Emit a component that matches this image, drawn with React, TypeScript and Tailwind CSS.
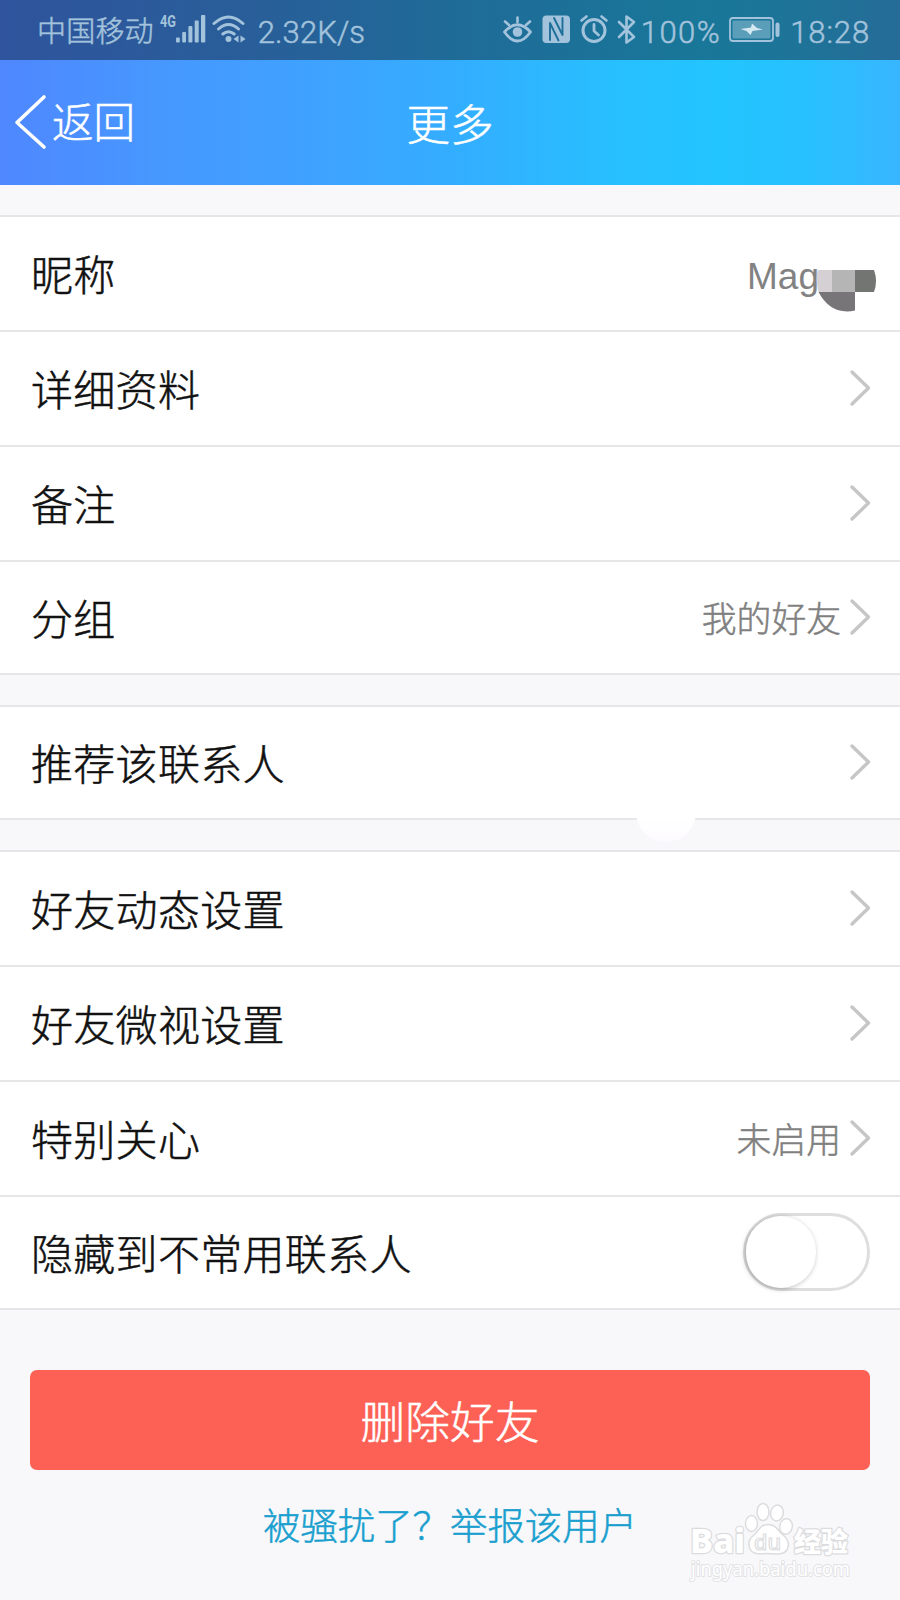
import type { ReactNode } from "react";

const CJK = "font-['Noto_Sans_CJK_SC',sans-serif]";
const LATIN = "font-[Roboto,'Noto_Sans_CJK_SC',sans-serif]";

function Chevron() {
  return (
    <svg className="mb-[1px] h-[38px] w-[22px] shrink-0" viewBox="0 0 22 38" fill="none" stroke="#c6c6c6" strokeWidth="3.4" strokeLinecap="round" strokeLinejoin="round">
      <path d="M3 3 L19.5 19 L3 35" />
    </svg>
  );
}

function Row({ label, value, last, children }: { label: string; value?: string; last?: boolean; children?: ReactNode }) {
  return (
    <div className={`flex items-center justify-between border-b-2 border-[#e6e6e8] pl-[31px] pr-[29px] ${last ? "h-[113px]" : "h-[115px]"}`}>
      <span className="pb-[2px] text-[42px] leading-none tracking-[0.3px] text-[#111]">{label}</span>
      {children ?? (
        <div className="flex items-center gap-[8px]">
          {value && <span className="text-[34.8px] leading-none text-[#808080]">{value}</span>}
          <Chevron />
        </div>
      )}
    </div>
  );
}

function Group({ children }: { children: ReactNode }) {
  return <section className="border-t-2 border-[#e6e6e8] bg-white">{children}</section>;
}

function StatusBar() {
  return (
    <div className={`flex h-[60px] items-center bg-[linear-gradient(90deg,#2f549d_0%,#285f99_30%,#1f6b98_50%,#197799_78%,#1c7598_86%,#256c98_100%)] pl-[37px] pr-[31px] text-[#a3c3dc] ${LATIN}`}>
      <span className="pt-[4px] text-[29px] leading-none tracking-[0.2px]">中国移动</span>
      <svg className="ml-[4px] h-[46px] w-[48px]" viewBox="157 8 48 46" fill="currentColor" strokeWidth="0">
        <text x="159" y="28" fontSize="17" fontWeight="700" textLength="16" lengthAdjust="spacingAndGlyphs">4G</text>
        <rect x="175" y="38.500" width="3.800" height="5" rx="1" />
        <rect x="181.200" y="33" width="3.800" height="10.500" rx="1" />
        <rect x="187.400" y="27" width="4" height="16.500" rx="1" />
        <rect x="193.700" y="21.500" width="4" height="22" rx="1" />
        <rect x="200" y="16" width="4.300" height="27.500" rx="1" />
      </svg>
      <svg className="ml-[6px] h-[34px] w-[34px]" viewBox="212 14 34 34" fill="none" stroke="currentColor" strokeWidth="3" strokeLinecap="round">
        <path d="M214 24.500 Q228.500 11.500 243 24.500" />
        <path d="M218.500 30 Q228.500 21 238.500 30" />
        <path d="M222.800 35 Q228.500 30.500 234.200 35" />
        <circle cx="228.500" cy="40" r="3" fill="currentColor" stroke="none" />
        <path d="M238.500 36.500v7l-5-3.500z M240.500 36.500v7l5-3.500z" fill="currentColor" stroke="none" />
      </svg>
      <span className="ml-[12px] pt-[5px] text-[31px] leading-none tracking-[0.1px]">2.32K/s</span>
      <svg className="ml-auto h-[34px] w-[136px] shrink-0" viewBox="502 14 136 34" fill="none" stroke="currentColor" strokeLinecap="round" strokeLinejoin="round">
        <path d="M504.500 33 Q517.500 18.500 530.500 33 Q517.500 51 504.500 33z" strokeWidth="2.800" />
        <circle cx="517.500" cy="33" r="4.800" fill="currentColor" stroke="none" />
        <path d="M517.500 23V18.500 M509 26l-4-3.500 M526 26l4-3.500" strokeWidth="2.600" />
        <rect x="542.500" y="16.500" width="27.500" height="27.500" rx="4" fill="currentColor" stroke="none" />
        <path d="M550 41v-17l8.500 17.500 M554 19l8.500 17v-17" stroke="#1e6f99" strokeWidth="1.900" />
        <circle cx="594" cy="31.500" r="11" strokeWidth="3" />
        <path d="M594 25.500v6.500l4.500 4" strokeWidth="2.800" />
        <path d="M581.500 21.500l5-4 M601.500 17.500l5 4" strokeWidth="2.600" />
        <path d="M619 23l15 15-7.500 5.500v-26l7.500 5.500-15 15" strokeWidth="2.600" />
      </svg>
      <span className="ml-[3px] pt-[5px] text-[31px] leading-none tracking-[1.500px]">100%</span>
      <svg className="ml-[8px] h-[26px] w-[52px] shrink-0" viewBox="730 18 52 26" fill="none" stroke="currentColor">
        <rect x="731" y="19" width="43" height="23" rx="3" strokeWidth="1.800" />
        <rect x="733.500" y="21.500" width="38" height="18" rx="1" fill="#5b9eb9" stroke="none" />
        <path d="M741.500 30l10.500-1.500 1-4 5 4.500 6 1.500-10.500 1.500-2 4-4-4z" fill="#d3e8f0" stroke="none" />
        <rect x="776.500" y="23.500" width="4" height="14.500" rx="2" fill="currentColor" stroke="none" />
      </svg>
      <span className="-mr-[1px] ml-[9px] pt-[5px] text-[31px] leading-none tracking-[0.900px]">18:28</span>
    </div>
  );
}

function Header() {
  return (
    <header className="grid h-[125px] grid-cols-3 items-center bg-[linear-gradient(90deg,#4f87ff_0%,#4698ff_18%,#3fa2ff_35%,#34adff_50%,#28bfff_68%,#22c5ff_80%,#28c0ff_90%,#38b6ff_100%)] text-white">
      <div className="flex items-center pb-[2px] pl-[14px]">
        <svg className="h-[56px] w-[33px]" viewBox="0 0 33 56" fill="none" stroke="currentColor" strokeWidth="3.600" strokeLinecap="round" strokeLinejoin="round">
          <path d="M30 3 L3 28.500 L30 53" />
        </svg>
        <span className="ml-[5px] pb-[2px] text-[41.500px] leading-none">返回</span>
      </div>
      <h1 className="text-center text-[43.500px] leading-none">更多</h1>
    </header>
  );
}

function Nickname() {
  return (
    <div className="relative -mr-[6px] flex h-[60px] items-center">
      <span className="pr-[58px] pt-[5px] font-['Liberation_Sans',sans-serif] text-[37px] leading-none text-[#828282] [-webkit-text-stroke:0]">Mag</span>
      <svg className="absolute right-0 top-[24px] h-[44px] w-[62px]" viewBox="815 268 62 44">
        <path d="M817.500 270h15v22h-14q-3-11-1-22z" fill="#d4d0d4" />
        <path d="M832 270h23v22h-23z" fill="#b5b5b5" />
        <path d="M855 270h19q4 11 0 22h-19z" fill="#727572" />
        <path d="M818.500 292h36.500v18.500q-24 5-36.500-18.500z" fill="#777577" />
      </svg>
    </div>
  );
}

function Switch() {
  return (
    <div className="relative mb-[1px] mr-[1px] h-[78px] w-[127px] rounded-full border-[3px] border-[#dedede] bg-white">
      <div className="h-[72px] w-[70px] rounded-full bg-white shadow-[-1px_1px_5px_rgba(0,0,0,0.28)]" />
    </div>
  );
}

function Watermark() {
  return (
    <svg className="absolute bottom-[18px] right-[44px] h-[82px] w-[170px]" viewBox="686 1500 170 82" fill="#fff" stroke="#dcdcde" strokeWidth="1.500">
      <g fontFamily="Noto Sans" paintOrder="stroke" strokeWidth="2.500" strokeLinejoin="round">
        <text x="690" y="1553" fontSize="34" fontWeight="800" textLength="55" lengthAdjust="spacingAndGlyphs">Bai</text>
        <text x="794" y="1552" fontSize="27" fontWeight="900" fontFamily="Noto Sans CJK SC" textLength="54" lengthAdjust="spacingAndGlyphs">经验</text>
        <text x="691" y="1575.500" fontSize="19" fontWeight="400" textLength="159" lengthAdjust="spacingAndGlyphs" stroke="#e2e2e4" strokeWidth="2">jingyan.baidu.com</text>
      </g>
      <ellipse cx="751.500" cy="1523.500" rx="6" ry="8" />
      <ellipse cx="763" cy="1512" rx="6" ry="8.500" />
      <ellipse cx="777" cy="1513" rx="6.300" ry="8" transform="rotate(12 777 1513)" />
      <ellipse cx="786" cy="1526.500" rx="6.300" ry="7.800" transform="rotate(10 786 1526.500)" />
      <path d="M768 1524.500c-8 0-9 6-13 9.500c-5 4-8 8-5 15c3 6 10 5 18 4.500c8 .5 15 2 19-3.500c3-6 1-11-4-15c-6-5-7-10.500-15-10.500z" />
      <text x="754" y="1549.500" fontFamily="Noto Sans" fontSize="22" fontWeight="500" strokeWidth="1.200" textLength="27" lengthAdjust="spacingAndGlyphs">du</text>
    </svg>
  );
}

export default function App() {
  return (
    <main className={`relative h-[1600px] w-[900px] overflow-hidden bg-[#f8f8fb] font-light ${CJK}`}>
      <div className="[-webkit-text-stroke:0.5px]">
        <StatusBar />
        <Header />
        <div className="flex flex-col gap-[30px] pt-[30px]">
          <Group>
            <Row label="昵称"><Nickname /></Row>
            <Row label="详细资料" />
            <Row label="备注" />
            <Row label="分组" value="我的好友" last />
          </Group>
          <div className="relative">
            <Group>
              <Row label="推荐该联系人" last />
            </Group>
            <div className="absolute left-[636px] top-[77px] h-[60px] w-[60px] rounded-full bg-[linear-gradient(#fff_60%,#fdfaff_100%)]" />
          </div>
          <Group>
            <Row label="好友动态设置" />
            <Row label="好友微视设置" />
            <Row label="特别关心" value="未启用" />
            <Row label="隐藏到不常用联系人" last><Switch /></Row>
          </Group>
        </div>
        <div className="flex flex-col px-[30px] pt-[60px]">
          <button className="h-[100px] rounded-[7px] bg-[#fd6156] text-[44.700px] leading-none text-white">删除好友</button>
          <a className="mt-[36px] text-center text-[37.400px] leading-none text-[#1a9fce]">被骚扰了？举报该用户</a>
        </div>
      </div>
      <Watermark />
    </main>
  );
}
